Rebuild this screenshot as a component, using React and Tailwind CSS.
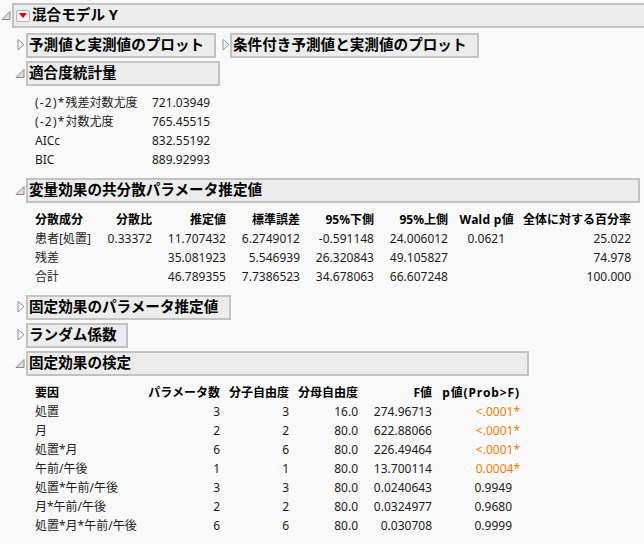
const jp = "font-['Noto_Sans','Noto_Sans_CJK_JP',sans-serif]";

function OpenIcon() {
  return (
    <svg width="10" height="10" viewBox="0 0 10 10" className="shrink-0">
      <path d="M9 0.5V8.5H1Z" fill="#dedede" stroke="#8a8a8a" strokeWidth="1" />
    </svg>
  );
}

function ClosedIcon() {
  return (
    <svg width="8" height="14" viewBox="0 0 8 14" className="shrink-0">
      <path d="M1 0.5L7 5.5L1 11Z" fill="#fafafa" stroke="#8f8f8f" strokeWidth="1" />
    </svg>
  );
}

function MenuButton() {
  return (
    <span className="flex h-[12px] w-[14px] shrink-0 items-center justify-center rounded-[2px] border border-[#b5b5b5] bg-[#f3f3f3]">
      <svg width="8" height="5" viewBox="0 0 8 5">
        <path d="M0 0H8L4 5Z" fill="#d40000" />
      </svg>
    </span>
  );
}

function Outline({ title, open = false, w }) {
  return (
    <div className="flex items-center">
      <span className="flex w-[26px] shrink-0 justify-end pr-[1px]">
        {open ? <OpenIcon /> : <ClosedIcon />}
      </span>
      <div className={`flex h-[25px] items-center whitespace-nowrap border-2 border-[#c2c2c2] bg-[#ececec] pb-[2px] pl-[1px] text-[14.6px] font-bold leading-none text-black ${w}`}>
        {title}
      </div>
    </div>
  );
}

const varRows = [
  ["患者[処置]", "0.33372", "11.707432", "6.2749012", "-0.591148", "24.006012", "0.0621", "25.022"],
  ["残差", "", "35.081923", "5.546939", "26.320843", "49.105827", "", "74.978"],
  ["合計", "", "46.789355", "7.7386523", "34.678063", "66.607248", "", "100.000"],
];

const fixedRows = [
  ["処置", "3", "3", "16.0", "274.96713", "<.0001", true],
  ["月", "2", "2", "80.0", "622.88066", "<.0001", true],
  ["処置*月", "6", "6", "80.0", "226.49464", "<.0001", true],
  ["午前/午後", "1", "1", "80.0", "13.700114", "0.0004", true],
  ["処置*午前/午後", "3", "3", "80.0", "0.0240643", "0.9949", false],
  ["月*午前/午後", "2", "2", "80.0", "0.0324977", "0.9680", false],
  ["処置*月*午前/午後", "6", "6", "80.0", "0.030708", "0.9999", false],
];

const fitRows = [
  [<><span className="tracking-[1.2px]">(-2)*</span>残差対数尤度</>, "721.03949"],
  [<><span className="tracking-[1.2px]">(-2)*</span>対数尤度</>, "765.45515"],
  ["AICc", "832.55192"],
  ["BIC", "889.92993"],
];

export default function App() {
  return (
    <div className={`h-[544px] w-[644px] overflow-hidden bg-[#f9f9f9] pt-[3px] text-[12px] text-[#1c1c1c] ${jp}`}>
      {/* top level report */}
      <div className="flex items-center">
        <span className="flex w-[12px] shrink-0 justify-start pl-[1px]">
          <OpenIcon />
        </span>
        <div className="flex h-[25px] flex-1 items-center gap-[2px] border-2 border-r-0 border-[#c2c2c2] bg-[#ececec] pl-[2px] text-[14.6px] font-bold leading-none text-black">
          <MenuButton />
          <span className="pb-[2px]">混合モデル Y</span>
        </div>
      </div>

      <div className="mt-[5px] flex">
        <Outline title="予測値と実測値のプロット" w="w-[190px]" />
        <span className="ml-[6px] flex items-center">
          <ClosedIcon />
        </span>
        <div className="flex h-[25px] w-[249px] items-center whitespace-nowrap border-2 border-[#c2c2c2] bg-[#ececec] pb-[2px] pl-[1px] text-[14.6px] font-bold leading-none text-black">
          条件付き予測値と実測値のプロット
        </div>
      </div>

      <div className="mt-[3px]">
        <Outline title="適合度統計量" open w="w-[194px]" />
        <table className="ml-[35px] mt-[7px] border-collapse whitespace-nowrap leading-[19px]">
          <tbody>
            {fitRows.map((r) => (
              <tr key={r[1]} className="h-[19px]">
                <td className="w-[117px] p-0">{r[0]}</td>
                <td className="p-0">{r[1]}</td>
              </tr>
            ))}
          </tbody>
        </table>
      </div>

      <div className="mt-[9px]">
        <Outline title="変量効果の共分散パラメータ推定値" open w="w-[614px]" />
        <table className="ml-[35px] mt-[7px] w-[596px] table-fixed border-collapse whitespace-nowrap leading-[19px]">
          <colgroup>
            <col className="w-[60px]" />
            <col className="w-[57px]" />
            <col className="w-[74px]" />
            <col className="w-[74px]" />
            <col className="w-[74px]" />
            <col className="w-[74px]" />
            <col className="w-[66px]" />
            <col className="w-[117px]" />
          </colgroup>
          <thead>
            <tr className="h-[19px] text-black">
              <th className="p-0 text-left font-bold">分散成分</th>
              <th className="p-0 text-right font-bold">分散比</th>
              <th className="p-0 text-right font-bold">推定値</th>
              <th className="p-0 text-right font-bold">標準誤差</th>
              <th className="p-0 text-right font-bold">95%下側</th>
              <th className="p-0 text-right font-bold">95%上側</th>
              <th className="p-0 text-right font-bold tracking-[0.3px]">Wald p値</th>
              <th className="p-0 text-right font-bold">全体に対する百分率</th>
            </tr>
          </thead>
          <tbody>
            {varRows.map((r) => (
              <tr key={r[0]} className="h-[19px]">
                <td className="p-0">{r[0]}</td>
                <td className="p-0 text-right">{r[1]}</td>
                <td className="p-0 text-right">{r[2]}</td>
                <td className="p-0 text-right">{r[3]}</td>
                <td className="p-0 text-right">{r[4]}</td>
                <td className="p-0 text-right">{r[5]}</td>
                <td className="p-0 pr-[9px] text-right">{r[6]}</td>
                <td className="p-0 text-right">{r[7]}</td>
              </tr>
            ))}
          </tbody>
        </table>
      </div>

      <div className="mt-[9px] flex flex-col gap-[3px]">
        <Outline title="固定効果のパラメータ推定値" w="w-[205px]" />
        <Outline title="ランダム係数" w="w-[102px]" />
        <Outline title="固定効果の検定" open w="w-[503px]" />
      </div>

      <table className="ml-[35px] mt-[7px] w-[485px] table-fixed border-collapse whitespace-nowrap leading-[19px]">
        <colgroup>
          <col className="w-[112px]" />
          <col className="w-[73px]" />
          <col className="w-[69px]" />
          <col className="w-[69px]" />
          <col className="w-[74px]" />
          <col className="w-[88px]" />
        </colgroup>
        <thead>
          <tr className="h-[19px] text-black">
            <th className="p-0 text-left font-bold">要因</th>
            <th className="p-0 text-right font-bold">パラメータ数</th>
            <th className="p-0 text-right font-bold">分子自由度</th>
            <th className="p-0 text-right font-bold">分母自由度</th>
            <th className="p-0 text-right font-bold">F値</th>
            <th className="p-0 text-right font-bold tracking-[0.9px]">p値(Prob&gt;F)</th>
          </tr>
        </thead>
        <tbody>
          {fixedRows.map((r) => (
            <tr key={r[0]} className="h-[19px]">
              <td className="p-0">{r[0]}</td>
              <td className="p-0 text-right">{r[1]}</td>
              <td className="p-0 text-right">{r[2]}</td>
              <td className="p-0 text-right">{r[3]}</td>
              <td className="p-0 text-right">{r[4]}</td>
              <td className={`p-0 text-right ${r[6] ? "text-[#f07d0a]" : "pr-[8px]"}`}>
                {r[5]}
                {r[6] && "*"}
              </td>
            </tr>
          ))}
        </tbody>
      </table>
    </div>
  );
}
